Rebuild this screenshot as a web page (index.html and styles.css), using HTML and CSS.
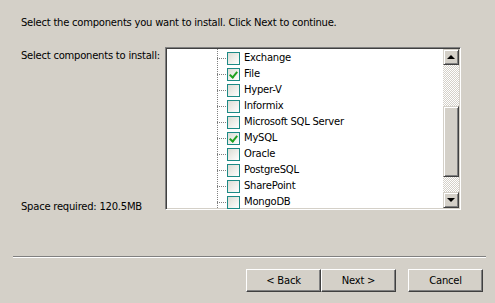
FILE: index.html
```html
<!DOCTYPE html>
<html lang="en">
<head>
    <meta charset="UTF-8">
    <title>Setup - Select Components</title>
    <link rel="stylesheet" href="styles.css">
</head>
<body>
    <div class="page">
        <p class="intro">Select the components you want to install. Click Next to continue.</p>

        <div class="main">
            <div class="side">
                <span>Select components to install:</span>
                <span class="space">Space required: 120.5MB</span>
            </div>

            <div class="listbox">
                <ul class="tree">
                    <li><span class="check"></span>Exchange</li>
                    <li><span class="check checked"></span>File</li>
                    <li><span class="check"></span>Hyper-V</li>
                    <li><span class="check"></span>Informix</li>
                    <li><span class="check"></span>Microsoft SQL Server</li>
                    <li><span class="check checked"></span>MySQL</li>
                    <li><span class="check"></span>Oracle</li>
                    <li><span class="check"></span>PostgreSQL</li>
                    <li><span class="check"></span>SharePoint</li>
                    <li><span class="check"></span>MongoDB</li>
                </ul>
                <div class="scrollbar">
                    <div class="sb-btn"><span class="arrow up"></span></div>
                    <div class="track top"></div>
                    <div class="thumb"></div>
                    <div class="track bottom"></div>
                    <div class="sb-btn"><span class="arrow down"></span></div>
                </div>
            </div>
        </div>

        <div class="separator"></div>

        <div class="buttons">
            <button class="btn">&lt; Back</button>
            <button class="btn">Next &gt;</button>
            <button class="btn cancel">Cancel</button>
        </div>
    </div>
</body>
</html>
```

FILE: styles.css
```css
/* Classic wizard page */
body {
    margin: 0;
    background-color: #d4d0c8;
    font-family: 'DejaVu Sans', Verdana, sans-serif;
    font-size: 10px;
    letter-spacing: -0.23px;
    color: #000;
}

.page {
    width: 495px;
    height: 303px;
}

.intro {
    margin: 0;
    padding: 16px 0 0 21px;
    line-height: 13px;
    height: 13px;
    margin-bottom: 18px;
    white-space: nowrap;
}

.main {
    display: flex;
    height: 163px;
}

.side {
    width: 144px;
    padding-left: 21px;
    display: flex;
    flex-direction: column;
    justify-content: space-between;
    line-height: 13px;
    padding-top: 2px;
    white-space: nowrap;
}

.space {
    margin-bottom: -3px;
}

/* sunken list box */
.listbox {
    width: 292px;
    height: 159px;
    background-color: #fff;
    border: 1px solid;
    border-color: #808080 #fff #fff #808080;
    box-shadow: inset 1px 1px 0 #404040, inset -1px -1px 0 #d4d0c8;
    padding: 1px;
    display: flex;
    overflow: hidden;
}

.tree {
    list-style: none;
    margin: 0;
    padding: 1px 0 0 0;
    flex: 1;
    background-image: repeating-linear-gradient(to bottom, #808080 0 1px, transparent 1px 2px);
    background-size: 1px 100%;
    background-repeat: no-repeat;
    background-position: 50px 0;
}

.tree li {
    height: 16px;
    line-height: 16px;
    display: flex;
    align-items: center;
    padding-left: 50px;
    white-space: nowrap;
}

.tree li::before {
    content: "";
    width: 9px;
    height: 1px;
    margin-top: 1px;
    background-image: repeating-linear-gradient(to right, #808080 0 1px, transparent 1px 2px);
    margin-right: 1px;
}

.check {
    width: 11px;
    height: 11px;
    border: 1px solid #1c8a86;
    background: linear-gradient(135deg, #dcdcd4, #fff);
    margin-right: 4px;
    position: relative;
}

.check.checked::after {
    content: "";
    position: absolute;
    left: 3px;
    top: 1px;
    width: 3px;
    height: 6px;
    border: solid #21a121;
    border-width: 0 2px 2px 0;
    transform: rotate(40deg);
}

/* scrollbar */
.scrollbar {
    width: 16px;
    display: flex;
    flex-direction: column;
}

.sb-btn,
.thumb {
    background-color: #d4d0c8;
    border: 1px solid;
    border-color: #d4d0c8 #404040 #404040 #d4d0c8;
    box-shadow: inset 1px 1px 0 #fff, inset -1px -1px 0 #808080;
    box-sizing: border-box;
}

.sb-btn {
    height: 16px;
    display: flex;
    align-items: center;
    justify-content: center;
}

.arrow {
    width: 0;
    height: 0;
    border-left: 4px solid transparent;
    border-right: 4px solid transparent;
}

.arrow.up {
    border-bottom: 4px solid #000;
}

.arrow.down {
    border-top: 4px solid #000;
}

.track {
    background-color: #fff;
    background-image: repeating-conic-gradient(#d4d0c8 0 25%, #fff 0 50%);
    background-size: 2px 2px;
}

.track.top {
    height: 41px;
}

.thumb {
    height: 71px;
}

.track.bottom {
    flex: 1;
}

/* bottom area */
.separator {
    margin: 46px 9px 0 13px;
    height: 1px;
    background-color: #808080;
    border-bottom: 1px solid #fff;
}

.buttons {
    display: flex;
    justify-content: flex-end;
    padding: 11px 12px 0 0;
}

.btn {
    width: 75px;
    height: 23px;
    padding: 0;
    margin: 0;
    font-family: 'DejaVu Sans', Verdana, sans-serif;
    font-size: 10px;
    letter-spacing: -0.23px;
    color: #000;
    background-color: #d4d0c8;
    border: 1px solid;
    border-color: #fff #404040 #404040 #fff;
    box-shadow: inset -1px -1px 0 #808080;
}

.btn.cancel {
    margin-left: 12px;
}
```
